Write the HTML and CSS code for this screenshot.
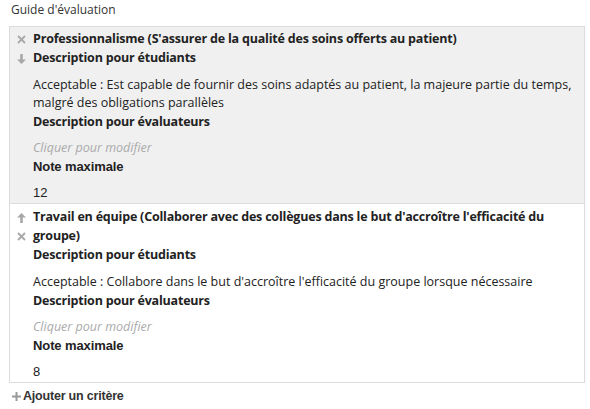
FILE: index.html
```html
<!DOCTYPE html>
<html lang="fr">
<head>
<meta charset="utf-8">
<link rel="stylesheet" href="styles.css">
</head>
<body>
<div class="guide">
  <div class="guide-title">Guide d'évaluation</div>
  <div class="criteria">
    <div class="criterion active">
      <div class="tools">
        <span class="tool">
          <svg width="9" height="9" viewBox="0 0 9 9"><path d="M1 1L8 8M8 1L1 8" stroke="#a8a8a8" stroke-width="1.8"/></svg>
        </span>
        <span class="tool">
          <svg width="9" height="10" viewBox="0 0 9 10"><path d="M3.2 0h2.6v5.5H9L4.5 10 0 5.5h3.2z" fill="#a8a8a8"/></svg>
        </span>
      </div>
      <div class="body">
        <div class="name">Professionnalisme (S'assurer de la qualité des soins offerts au patient)</div>
        <div class="label">Description pour étudiants</div>
        <div class="text">Acceptable : Est capable de fournir des soins adaptés au patient, la majeure partie du temps, malgré des obligations parallèles</div>
        <div class="label">Description pour évaluateurs</div>
        <div class="text placeholder">Cliquer pour modifier</div>
        <div class="label alt">Note maximale</div>
        <div class="text num">12</div>
      </div>
    </div>
    <div class="criterion">
      <div class="tools">
        <span class="tool">
          <svg width="9" height="10" viewBox="0 0 9 10"><path d="M3.2 10h2.6V4.5H9L4.5 0 0 4.5h3.2z" fill="#a8a8a8"/></svg>
        </span>
        <span class="tool">
          <svg width="9" height="9" viewBox="0 0 9 9"><path d="M1 1L8 8M8 1L1 8" stroke="#a8a8a8" stroke-width="1.8"/></svg>
        </span>
      </div>
      <div class="body">
        <div class="name">Travail en équipe (Collaborer avec des collègues dans le but d'accroître l'efficacité du groupe)</div>
        <div class="label">Description pour étudiants</div>
        <div class="text">Acceptable : Collabore dans le but d'accroître l'efficacité du groupe lorsque nécessaire</div>
        <div class="label">Description pour évaluateurs</div>
        <div class="text placeholder">Cliquer pour modifier</div>
        <div class="label alt">Note maximale</div>
        <div class="text num">8</div>
      </div>
    </div>
  </div>
  <div class="add">
    <svg width="9" height="9" viewBox="0 0 9 9"><path d="M3.5 0h2v3.5H9v2H5.5V9h-2V5.5H0v-2h3.5z" fill="#999"/></svg>
    <span>Ajouter un critère</span>
  </div>
</div>
</body>
</html>
```
FILE: styles.css
```css
html, body {
  margin: 0;
  padding: 0;
  background: #fff;
}
body {
  font-family: "Open Sans", "Noto Sans", sans-serif;
  font-size: 12.5px;
  color: #222;
}
.guide {
  padding: 1px 5px 0 9px;
}
.guide-title {
  font-size: 12px;
  line-height: 18px;
  padding-left: 2px;
  color: #333;
  margin-bottom: 7px;
}
.criteria {
  border: 1px solid #dcdcdc;
}
.criterion {
  display: flex;
  padding: 2px 0 0 0;
}
.criterion + .criterion {
  border-top: 1px solid #dcdcdc;
  padding-top: 3px;
}
.criterion.active {
  background: #f0f0f0;
}
.tools {
  width: 23px;
  display: flex;
  flex-direction: column;
  align-items: center;
  padding-top: 1px;
}
.tool {
  height: 19px;
  display: flex;
  align-items: center;
  justify-content: center;
}
.body {
  flex: 1;
  padding-right: 10px;
}
.name, .label {
  font-weight: bold;
  line-height: 19px;
  letter-spacing: -0.2px;
}
.label.alt {
  font-family: "Liberation Sans", Arial, sans-serif;
  font-size: 13px;
  letter-spacing: -0.1px;
}
.text {
  line-height: 18px;
  margin-top: 8.5px;
}
.placeholder {
  font-style: italic;
  color: #aaa;
}
.num {
  font-family: "Liberation Sans", Arial, sans-serif;
  font-size: 13px;
  margin-top: 8px;
  padding-bottom: 1px;
}
.add {
  display: flex;
  align-items: center;
  gap: 2px;
  padding: 6px 0 0 3px;
  font-family: "Liberation Sans", Arial, sans-serif;
  font-weight: bold;
  font-size: 12.5px;
  letter-spacing: -0.2px;
  color: #333;
}
```
